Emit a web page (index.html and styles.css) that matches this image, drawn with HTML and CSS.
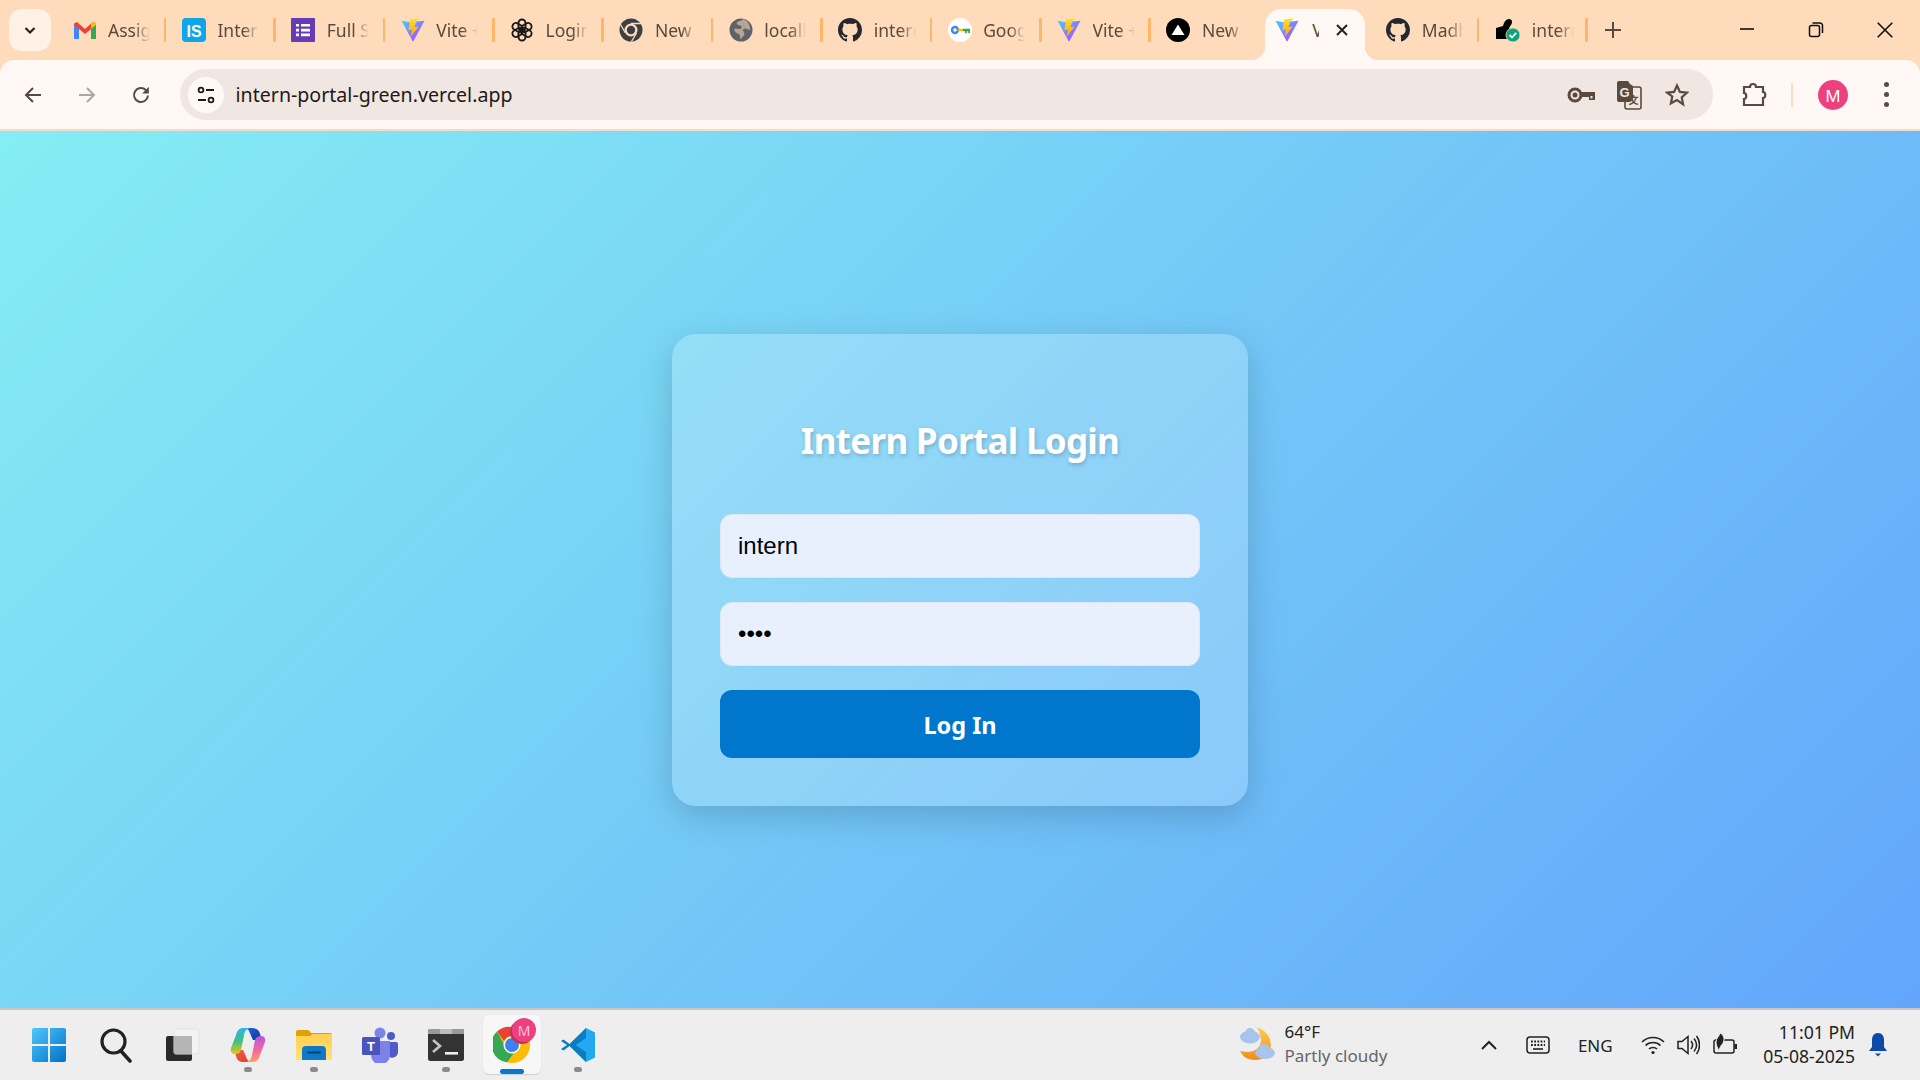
FILE: index.html
```html
<!DOCTYPE html>
<html lang="en">
<head>
<meta charset="utf-8">
<title>Vite + React</title>
<link rel="stylesheet" href="styles.css">
</head>
<body>
<svg class="defs" width="0" height="0" aria-hidden="true">
  <defs>
    <linearGradient id="vg" x1="0" y1="0" x2="1" y2="1"><stop offset="0" stop-color="#41d1ff"/><stop offset="1" stop-color="#bd34fe"/></linearGradient>
    <linearGradient id="vb" x1="0" y1="0" x2="0" y2="1"><stop offset="0" stop-color="#ffdd35"/><stop offset="1" stop-color="#ffa800"/></linearGradient>
    <linearGradient id="winG" x1="0" y1="0" x2="1" y2="1"><stop offset="0" stop-color="#4fc8fb"/><stop offset="1" stop-color="#0071c9"/></linearGradient>
    <linearGradient id="copA" x1="0" y1="0" x2="1" y2="1"><stop offset="0" stop-color="#1d6fe0"/><stop offset="1" stop-color="#14309c"/></linearGradient>
    <linearGradient id="copB" x1="0" y1="0" x2="0" y2="1"><stop offset="0" stop-color="#b358e0"/><stop offset=".55" stop-color="#f268a0"/><stop offset="1" stop-color="#fba35e"/></linearGradient>
    <linearGradient id="copC" x1="0" y1="0" x2="0" y2="1"><stop offset="0" stop-color="#2ab4ee"/><stop offset=".5" stop-color="#3fbf7f"/><stop offset="1" stop-color="#e8c51a"/></linearGradient>
    <linearGradient id="copD" x1="0" y1="0" x2="1" y2="1"><stop offset="0" stop-color="#f2603a"/><stop offset="1" stop-color="#e03a3a"/></linearGradient>
    <linearGradient id="moon" x1="0" y1="0" x2="0" y2="1"><stop offset="0" stop-color="#fbcf4f"/><stop offset="1" stop-color="#f28a1e"/></linearGradient>
    <linearGradient id="folder" x1="0" y1="0" x2="0" y2="1"><stop offset="0" stop-color="#ffd04f"/><stop offset="1" stop-color="#ffe27a"/></linearGradient>
    <symbol id="vite" viewBox="0 0 24 24">
      <path d="M0.500 2.800 L9 4.200 L15.500 3.600 L23.500 2.800 L12.500 23 Q12 23.800 11.500 23 Z" fill="url(#vg)"/>
      <path d="M18.200 0.300 L9 1.600 L7.400 12.300 L11 11.500 L9.600 19 L17.600 8.400 L13.400 9.200 L15 4.400 Z" fill="url(#vb)"/>
    </symbol>
    <symbol id="gh" viewBox="0 0 16 16">
      <path fill="#24292f" d="M8 0C3.58 0 0 3.58 0 8c0 3.54 2.29 6.53 5.47 7.59.4.07.55-.17.55-.38 0-.19-.01-.82-.01-1.49-2.01.37-2.53-.49-2.69-.94-.09-.23-.48-.94-.82-1.13-.28-.15-.68-.52-.01-.53.63-.01 1.08.58 1.23.82.72 1.21 1.87.87 2.33.66.07-.52.28-.87.51-1.07-1.78-.2-3.64-.89-3.64-3.95 0-.87.31-1.59.82-2.15-.08-.2-.36-1.02.08-2.12 0 0 .67-.21 2.2.82.64-.18 1.32-.27 2-.27.68 0 1.36.09 2 .27 1.53-1.04 2.2-.82 2.2-.82.44 1.1.16 1.92.08 2.12.51.56.82 1.27.82 2.15 0 3.07-1.87 3.75-3.65 3.95.29.25.54.73.54 1.48 0 1.07-.01 1.93-.01 2.2 0 .21.15.46.55.38A8.013 8.013 0 0016 8c0-4.42-3.58-8-8-8z"/>
    </symbol>
  </defs>
</svg>

<header class="chrome">
  <div class="tabstrip">
    <button class="tabsearch"><svg viewBox="0 0 16 16" width="16" height="16"><path d="M3.500 6 L8 10.500 L12.500 6" fill="none" stroke="#2b211a" stroke-width="2.200"/></svg></button>
    <div class="tabs">
      <div class="tab">
        <svg class="fav" viewBox="0 0 24 24"><path d="M1 21V5.500l3-1.500 8 7 8-7 3 1.500V21h-5V11l-6 5-6-5v10z" fill="#ea4335"/><path d="M1 21h5V11L1 6.500z" fill="#4285f4"/><path d="M18 21h5V6.500L18 11z" fill="#34a853"/><path d="M18 11V5.500l2-1.500 3 1.500v1.500z" fill="#fbbc04"/></svg>
        <span class="title">Assignment</span>
      </div>
      <div class="tab">
        <svg class="fav" viewBox="0 0 24 24"><rect x="0" y="0" width="24" height="24" rx="4" fill="#0ea5e9"/><text x="12" y="18.500" class="fav-letters">IS</text></svg>
        <span class="title">Intern</span>
      </div>
      <div class="tab">
        <svg class="fav" viewBox="0 0 24 24"><rect width="24" height="24" rx="1" fill="#673ab7"/><path d="M5 6h3v2.600H5zM10 6h9v2.600h-9zM5 10.800h3v2.600H5zM10 10.800h9v2.600h-9zM5 15.600h3v2.600H5zM10 15.600h9v2.600h-9z" fill="#fff"/></svg>
        <span class="title">Full Stack</span>
      </div>
      <div class="tab">
        <svg class="fav"><use href="#vite"/></svg>
        <span class="title">Vite + React</span>
      </div>
      <div class="tab">
        <svg class="fav" viewBox="0 0 24 24" fill="none" stroke="#1a1a1a" stroke-width="1.900"><rect x="8.500" y="1.500" width="7" height="11" rx="3.500"/><rect x="8.500" y="1.500" width="7" height="11" rx="3.500" transform="rotate(60 12 12)"/><rect x="8.500" y="1.500" width="7" height="11" rx="3.500" transform="rotate(120 12 12)"/><rect x="8.500" y="1.500" width="7" height="11" rx="3.500" transform="rotate(180 12 12)"/><rect x="8.500" y="1.500" width="7" height="11" rx="3.500" transform="rotate(240 12 12)"/><rect x="8.500" y="1.500" width="7" height="11" rx="3.500" transform="rotate(300 12 12)"/></svg>
        <span class="title">Login</span>
      </div>
      <div class="tab">
        <svg class="fav" viewBox="0 0 24 24"><circle cx="12" cy="12" r="11.500" fill="#3c4043"/><circle cx="12" cy="12" r="6.500" fill="#fedbbb"/><circle cx="12" cy="12" r="4.200" fill="#3c4043"/><path d="M12 5.500h10M6.400 15 1.500 6.500M17.600 15 12.500 23.500" stroke="#fedbbb" stroke-width="1.300"/></svg>
        <span class="title">New Tab</span>
      </div>
      <div class="tab">
        <svg class="fav" viewBox="0 0 24 24"><circle cx="12" cy="12" r="11.500" fill="#5f6368"/><path d="M14 1.500c-2 2-5 1-6 3-1 1 1 3 3 3 2 0 2 2 1 3-1 1-4 0-6 0-1 0-1 2 0 3 1 2 4 2 5 4 0 2 0 3 1 4 .500-2 2-3 3-4 1-2 0-3-1-5-.500-1 1-2 2-2 2 0 4 1 5 2 .500-5-2-10-7-11.500z" fill="#fedbbb" opacity=".55"/></svg>
        <span class="title">localhost</span>
      </div>
      <div class="tab">
        <svg class="fav"><use href="#gh"/></svg>
        <span class="title">intern-portal</span>
      </div>
      <div class="tab">
        <svg class="fav" viewBox="0 0 24 24"><circle cx="12" cy="12" r="12" fill="#fff"/><circle cx="7" cy="12" r="3" fill="none" stroke="#4285f4" stroke-width="2.400"/><rect x="10" y="10.800" width="5" height="2.400" fill="#fbbc04"/><path d="M15 10.800h7v4.500h-1.800v-2.100h-1.400v2.100H17v-2.100h-2z" fill="#34a853"/></svg>
        <span class="title">Google</span>
      </div>
      <div class="tab">
        <svg class="fav"><use href="#vite"/></svg>
        <span class="title">Vite + React</span>
      </div>
      <div class="tab tab-last">
        <svg class="fav" viewBox="0 0 24 24"><circle cx="12" cy="12" r="12" fill="#000"/><path d="M12 6.500 18.500 17h-13z" fill="#fff"/></svg>
        <span class="title">New Tab</span>
      </div>
      <div class="tab tab-active">
        <svg class="fav"><use href="#vite"/></svg>
        <span class="title title-short">Vite</span>
        <svg class="close" viewBox="0 0 12 12" width="12" height="12"><path d="M1 1l10 10M11 1 1 11" stroke="#2b211a" stroke-width="2"/></svg>
      </div>
      <div class="tab">
        <svg class="fav"><use href="#gh"/></svg>
        <span class="title">Madhu</span>
      </div>
      <div class="tab">
        <svg class="fav" viewBox="0 0 24 24"><path d="M0 10l7-2c1-4 3-7 6-7s4 3 2 6c-2 2-2 4-2 7v7H0z" fill="#000"/><circle cx="17" cy="17" r="7" fill="#10a37f" stroke="#fedbbb" stroke-width=".8"/><path d="M13.500 17l2.500 2.500 4.200-4.700" fill="none" stroke="#fff" stroke-width="1.800"/></svg>
        <span class="title">intern</span>
      </div>
    </div>
    <button class="newtab"><svg viewBox="0 0 16 16" width="16" height="16"><path d="M8 0v16M0 8h16" stroke="#5a4a3d" stroke-width="2"/></svg></button>
    <div class="winctl">
      <svg viewBox="0 0 16 16" width="16" height="16"><path d="M1 7h14" stroke="#111" stroke-width="1.600"/></svg>
      <svg viewBox="0 0 16 16" width="16" height="16"><rect x="1.500" y="3.500" width="10" height="11" rx="2" fill="none" stroke="#111" stroke-width="1.500"/><path d="M4.500 1h7.500a2.500 2.500 0 0 1 2.500 2.500V11" fill="none" stroke="#111" stroke-width="1.500"/></svg>
      <svg viewBox="0 0 16 16" width="16" height="16"><path d="M.7.7l14.600 14.600M15.300.7.700 15.300" stroke="#111" stroke-width="1.600"/></svg>
    </div>
  </div>

  <div class="toolbar">
    <button class="navbtn"><svg viewBox="0 0 20 20" width="20" height="20"><path d="M18 10H3M10 3l-7 7 7 7" fill="none" stroke="#5a4a3d" stroke-width="2"/></svg></button>
    <button class="navbtn"><svg viewBox="0 0 20 20" width="20" height="20"><path d="M2 10h15M10 3l7 7-7 7" fill="none" stroke="#b0a69f" stroke-width="2"/></svg></button>
    <button class="navbtn"><svg viewBox="0 0 20 20" width="20" height="20"><path d="M17 10.500a7 7 0 1 1-2.200-5.600L17 7" fill="none" stroke="#5a4a3d" stroke-width="2"/><path d="M17.800 1.800v6.600h-6.600" fill="#5a4a3d"/></svg></button>
    <div class="omnibox">
      <span class="tune"><svg viewBox="0 0 20 20" width="20" height="20"><circle cx="5" cy="5" r="2.400" fill="none" stroke="#1f1a17" stroke-width="1.800"/><path d="M10 5h8M2 15h8" stroke="#1f1a17" stroke-width="1.800"/><circle cx="15" cy="15" r="2.400" fill="none" stroke="#1f1a17" stroke-width="1.800"/></svg></span>
      <span class="url">intern-portal-green.vercel.app</span>
      <span class="omni-icons">
        <svg class="oi-key" viewBox="0 0 28 18" width="28" height="18"><circle cx="8" cy="9" r="6" fill="none" stroke="#5a4a3d" stroke-width="3"/><circle cx="8" cy="9" r="2.500" fill="#5a4a3d"/><path d="M14 6h14v8h-6v-3h-8z" fill="#5a4a3d"/><rect x="23.500" y="10" width="2" height="2.500" fill="#f0e7e2"/></svg>
        <svg class="oi-tr" viewBox="0 0 26 30" width="26" height="30"><rect x="9" y="7" width="16" height="22" rx="2" fill="#f0e7e2" stroke="#5a4a3d" stroke-width="1.600"/><path d="M3 1h9l2 3 3 2v14l-3 2H3a2 2 0 0 1-2-2V3a2 2 0 0 1 2-2z" fill="#5a4a3d"/><text x="8.500" y="17" class="translate-g">G</text><text x="17.500" y="24" class="translate-z">文</text></svg>
        <svg viewBox="0 0 24 24" width="24" height="24"><path d="M12 2.500l2.900 6.400 7 .8-5.200 4.700 1.400 6.900L12 17l-6.100 3.300 1.400-6.900L2.100 9.700l7-.8z" fill="none" stroke="#5a4a3d" stroke-width="2.200"/></svg>
      </span>
    </div>
    <button class="extbtn"><svg viewBox="0 0 26 26" width="26" height="26"><path d="M3 5h6c0-4 6-4 6 0h7v5c3 0 3 6 0 6v7H3v-6c3 0 3-6 0-6z" fill="none" stroke="#5a4a3d" stroke-width="2.200"/></svg></button>
    <span class="tool-sep"></span>
    <span class="avatar">M</span>
    <button class="morebtn"><span></span><span></span><span></span></button>
  </div>
</header>

<main class="page">
  <form class="card">
    <h1 class="card-title">Intern Portal Login</h1>
    <input class="field" type="text" value="intern">
    <input class="field" type="password" value="1234">
    <button class="submit" type="button">Log In</button>
  </form>
</main>

<footer class="taskbar">
  <div class="apps">
    <div class="app app-start">
      <svg viewBox="0 0 36 36" width="36" height="36"><path d="M1 3a2 2 0 0 1 2-2h14v16H1zM19 1h14a2 2 0 0 1 2 2v14H19zM1 19h16v16H3a2 2 0 0 1-2-2zM19 19h16v14a2 2 0 0 1-2 2H19z" fill="url(#winG)"/></svg>
    </div>
    <div class="app">
      <svg viewBox="0 0 36 36" width="36" height="36"><circle cx="15.500" cy="14.500" r="11.500" fill="none" stroke="#222" stroke-width="3.200"/><path d="M23 24l9 10" stroke="#222" stroke-width="3.600" stroke-linecap="round"/></svg>
    </div>
    <div class="app">
      <svg viewBox="0 0 36 36" width="36" height="36"><rect x="2" y="9" width="26" height="25" rx="2" fill="#2a2a2a"/><rect x="10" y="2" width="25" height="25" rx="2" fill="#f3f3f3" stroke="#e2e2e2"/><rect x="10" y="9" width="18" height="18" fill="#b5b5b5"/></svg>
    </div>
    <div class="app has-dot">
      <svg viewBox="0 0 36 36" width="36" height="36">
        <path d="M13 1h9c5 0 7 2 8 6l2 6h-9c-2-4-3-7-4-9-1-2-3-3-6-3z" fill="url(#copA)"/>
        <path d="M23 35h-9c-5 0-7-2-8-6l-2-6h9c2 4 3 7 4 9 1 2 3 3 6 3z" fill="url(#copD)"/>
        <path d="M13 1h7c-4 1-5 3-6 7l-3 15c-1 3-3 4-6 4-3 0-5-2-4-6L6 8c1-4 3-7 7-7z" fill="url(#copC)"/>
        <path d="M23 35h-7c4-1 5-3 6-7l3-15c1-3 3-4 6-4 3 0 5 2 4 6L30 28c-1 4-3 7-7 7z" fill="url(#copB)"/>
      </svg>
    </div>
    <div class="app has-dot">
      <svg viewBox="0 0 36 36" width="36" height="36"><path d="M0 5a2 2 0 0 1 2-2h9c2 0 3 1 4 3h19a2 2 0 0 1 2 2v6H0z" fill="#dfa200"/><path d="M0 9h14l3-2h19v26H0z" fill="url(#folder)"/><path d="M6 33v-10a4 4 0 0 1 4-4h16a4 4 0 0 1 4 4v10z" fill="#0d79c8"/><rect x="11" y="24.500" width="14" height="2" rx="1" fill="#063f73"/></svg>
    </div>
    <div class="app">
      <svg viewBox="0 0 36 36" width="36" height="36"><circle cx="29" cy="9" r="4" fill="#5059c9"/><path d="M25 15h9a2 2 0 0 1 2 2v8a6 6 0 0 1-11 3z" fill="#5059c9"/><circle cx="18" cy="6" r="5.500" fill="#7b83eb"/><path d="M9 14h19v14a9 9 0 0 1-19 0z" fill="#7b83eb"/><rect x="0" y="10" width="18" height="18" rx="1.500" fill="#4b53bc"/><text x="9" y="24" class="teams-t">T</text></svg>
    </div>
    <div class="app has-dot">
      <svg viewBox="0 0 36 36" width="36" height="36"><rect y="2" width="36" height="32" rx="2.500" fill="#333"/><path d="M0 4.500A2.500 2.500 0 0 1 2.500 2H36v5H0z" fill="#9a9a9a"/><rect x="12" y="2" width="12" height="5" fill="#bdbdbd"/><path d="M5 13l7 6-7 6" fill="none" stroke="#c4c4c4" stroke-width="2.600"/><rect x="17" y="25" width="13" height="2.600" fill="#eee"/></svg>
    </div>
    <div class="app app-active">
      <svg class="chrome-logo" viewBox="0 0 38 38" width="38" height="38"><circle cx="19" cy="19" r="18" fill="#fbbc04"/><path d="M19 1a18 18 0 0 1 15.600 9H19a9 9 0 0 0-8 5L4 5.500A18 18 0 0 1 19 1z" fill="#ea4335"/><path d="M4 5.500l7.500 14a9 9 0 0 0 9 8L14 36.300A18 18 0 0 1 4 5.500z" fill="#34a853"/><circle cx="19" cy="19" r="8.500" fill="#fff"/><circle cx="19" cy="19" r="7" fill="#3b82f0"/></svg>
      <span class="app-badge">M</span>
    </div>
    <div class="app has-dot">
      <svg viewBox="0 0 36 36" width="36" height="36"><path d="M26 1l9 4.500v25L26 35 10 19z" fill="#23a8f2"/><path d="M26 1 9.500 17l-6-4.500L1 14l6 4-6 4 2.500 1.500 6-4.500L26 35V25L15.500 18 26 11z" fill="#0a7cc1"/></svg>
    </div>
  </div>
  <div class="weather">
    <svg viewBox="0 0 36 36" width="36" height="36"><path d="M17 1c12 3 17 14 14 24-2 7-11 11-21 8-4-1-7-4-9-8 12 3 20-1 21-10 0-6-2-11-5-14z" fill="url(#moon)"/><ellipse cx="11" cy="11" rx="10" ry="6.500" fill="#a9c4ec"/><circle cx="11" cy="7" r="5" fill="#a9c4ec"/><ellipse cx="26" cy="27" rx="10" ry="6" fill="#a9c4ec"/><circle cx="25" cy="23" r="5" fill="#a9c4ec"/></svg>
    <div class="weather-text"><span class="temp">64°F</span><span class="cond">Partly cloudy</span></div>
  </div>
  <div class="tray">
    <svg class="t-chev" viewBox="0 0 18 12" width="18" height="12"><path d="M2 10l7-7 7 7" fill="none" stroke="#222" stroke-width="2"/></svg>
    <svg class="t-kbd" viewBox="0 0 24 20" width="24" height="20"><rect x="1" y="2" width="22" height="16" rx="3" fill="none" stroke="#222" stroke-width="1.500"/><path d="M5 6.500h14M5 10h14" stroke="#222" stroke-width="1.800" stroke-dasharray="1.800 1.400"/><path d="M7 14h10" stroke="#222" stroke-width="1.600"/></svg>
    <span class="lang">ENG</span>
    <svg class="t-wifi" viewBox="0 0 24 20" width="24" height="20" fill="none" stroke="#222" stroke-width="1.700"><path d="M1 7c6-6 16-6 22 0M4.500 10.500c4-4 11-4 15 0M8 14c2-2 6-2 8 0"/><circle cx="12" cy="17.500" r="1.600" fill="#222" stroke="none"/></svg>
    <svg class="t-vol" viewBox="0 0 24 24" width="24" height="24" fill="none" stroke="#222" stroke-width="1.500"><path d="M2 8.500h4l6-5v17l-6-5H2z"/><path d="M15 8c2 2.500 2 5.500 0 8M18 5.500c3.200 4 3.200 9 0 13M20.500 3c4 5 4 13 0 18"/></svg>
    <svg class="t-bat" viewBox="0 0 26 24" width="26" height="24"><rect x="2" y="7" width="20" height="13" rx="2" fill="none" stroke="#222" stroke-width="1.500"/><rect x="22.500" y="11" width="2.500" height="5" fill="#222"/><path d="M8 0c4 2 5 6 3 10-1 2-3 3-4 8-2-4-3-6-3-9 0-4 3-5 4-9z" fill="#222" stroke="#eee"/></svg>
    <div class="clock"><span>11:01 PM</span><span>05-08-2025</span></div>
    <svg class="t-bell" viewBox="0 0 20 26" width="20" height="26"><path d="M10 1c4 0 6 3 6 7v7l3 4H1l3-4V8c0-4 2-7 6-7z" fill="#0b4aa6"/><path d="M7 21.500h6l-3 3z" fill="#0b4aa6"/></svg>
  </div>
</footer>
</body>
</html>
```

FILE: styles.css
```css
* { box-sizing: border-box; }
html, body { margin: 0; height: 100%; }
body {
  height: 1080px;
  display: flex;
  flex-direction: column;
  overflow: hidden;
  font-family: "Noto Sans", "Open Sans", sans-serif;
}
button { border: 0; background: none; padding: 0; font: inherit; cursor: pointer; }
.defs { position: absolute; }

/* browser chrome */
.chrome { background: #fedbbb; flex: none; }
.tabstrip { height: 60px; display: flex; align-items: flex-start; padding-left: 9px; }
.tabsearch {
  width: 42px; height: 42px; margin-top: 9px;
  border-radius: 13px; background: #fff1e5;
  display: flex; align-items: center; justify-content: center;
}
.tabs { display: flex; margin-left: 6px; height: 60px; }
.tab {
  width: 109.400px; height: 60px; flex: none;
  display: flex; align-items: center;
  padding: 0 0 0 15.500px;
  position: relative;
  padding-bottom: 1px;
}
.tab::after {
  content: ""; position: absolute; right: 0; top: 18px;
  width: 2.500px; height: 24px; background: #fdb566; border-radius: 1px;
}
.tab-last::after { display: none; }
.fav { width: 24px; height: 24px; flex: none; }
.title {
  margin-left: 11.500px; width: 42px; overflow: hidden; white-space: nowrap;
  font-size: 17.500px; color: #5a4a3d;
  -webkit-mask-image: linear-gradient(90deg, #000 62%, transparent 100%);
  mask-image: linear-gradient(90deg, #000 62%, transparent 100%);
}
.fav-letters { font: 700 16px "Liberation Sans", sans-serif; fill: #fff; text-anchor: middle; }
.tab-active {
  width: 100px; margin-left: 5px; margin-top: 9px; height: 51px;
  padding-left: 10px; padding-bottom: 9px;
  background: #fff8f5; border-radius: 16px 16px 0 0;
}
.tab-active::after {
  left: auto; right: -14px; top: auto; bottom: 0; width: 14px; height: 14px; border-radius: 0;
  background: radial-gradient(circle at 100% 0, transparent 14px, #fff8f5 14.500px);
}
.tab-active::before {
  content: ""; position: absolute; left: -14px; bottom: 0; width: 14px; height: 14px;
  background: radial-gradient(circle at 0 0, transparent 14px, #fff8f5 14.500px);
}
.title-short { width: 7px; margin-left: 13px; -webkit-mask-image: none; mask-image: none; }
.close { margin-left: 17px; flex: none; }
.tab-active + .tab { margin-left: 0; padding-left: 21px; width: 114px; }
.tab-active + .tab + .tab { width: 108.500px; padding-left: 17px; }
.newtab { width: 16px; height: 16px; margin: 22px 0 0 17px; flex: none; display: flex; }
.winctl {
  margin-left: auto; display: flex; gap: 53px; padding: 22px 27px 0 0; align-items: center;
}
.winctl svg { display: block; }

.toolbar {
  height: 71px; background: #fff8f5;
  border-radius: 14px 14px 0 0;
  border-bottom: 2px solid #f4dccb;
  display: flex; align-items: flex-start;
  padding: 9px 0 0 11px;
  position: relative;
}
.navbtn {
  width: 54px; height: 51px; flex: none; padding-left: 12px;
  display: flex; align-items: center;
}
.omnibox {
  width: 1533px; height: 51px; margin-left: 7px; flex: none;
  background: #f0e7e2; border-radius: 26px;
  display: flex; align-items: center; padding: 0 0 0 8px;
}
.tune {
  width: 36px; height: 36px; border-radius: 50%; background: #fff8f5;
  display: flex; align-items: center; justify-content: center; flex: none;
}
.url { margin-left: 11.500px; margin-top: -1px; font-size: 19.600px; color: #1f1a17; white-space: nowrap; }
.omni-icons { margin-left: auto; display: flex; align-items: center; gap: 20px; padding-right: 24px; }
.omni-icons svg { display: block; }
.oi-key { margin-right: 1px; }
.oi-tr { margin-right: 3.500px; }
.translate-g { font: 700 13px "Liberation Sans", sans-serif; fill: #f0e7e2; text-anchor: middle; }
.translate-z { font: 700 10px "Noto Sans CJK SC", sans-serif; fill: #5a4a3d; text-anchor: middle; }
.extbtn { width: 26px; height: 51px; margin-left: 28px; display: flex; align-items: center; flex: none; }
.tool-sep { width: 2px; height: 24px; margin: 14px 0 0 24px; background: #fbdcc2; flex: none; }
.avatar {
  width: 30px; height: 30px; margin: 11px 0 0 25px; border-radius: 50%;
  background: #ee3f7e; color: #fff; font-size: 17px;
  display: flex; align-items: center; justify-content: center; flex: none;
}
.morebtn {
  width: 6px; height: 51px; margin-left: 35.500px; flex: none;
  display: flex; flex-direction: column; align-items: center; justify-content: center; gap: 5px;
}
.morebtn span { width: 5px; height: 5px; border-radius: 50%; background: #5a4a3d; flex: none; }

/* page */
.page {
  flex: 1; min-height: 0;
  background: linear-gradient(135deg, #85edf3 0%, #62a5fb 100%);
  display: flex; align-items: center; justify-content: center;
  padding-top: 1px;
}
.card {
  width: 576px; height: 472px; padding: 48px;
  border-radius: 24px;
  background: rgba(255, 255, 255, 0.2);
  box-shadow: 0 10px 34px rgba(0, 0, 0, 0.17);
  display: flex; flex-direction: column;
}
.card-title {
  margin: 37px 0 51px; height: 44px; line-height: 44px;
  font-size: 35px; font-weight: 700; color: #fff; text-align: center;
  letter-spacing: -0.700px;
  text-shadow: 1px 2px 4px rgba(0, 0, 0, 0.2);
}
.field {
  height: 64px; flex: none; width: 100%;
  margin-bottom: 24px; padding: 0 17px;
  border: 1px solid #dfe6f5; border-radius: 12px;
  background: #e8f0fe;
  font: 24px "Liberation Sans", Arial, sans-serif; color: #000;
  outline: none;
}
.submit {
  height: 68px; flex: none; border-radius: 12px; padding-top: 2px;
  background: #0077cc; color: #fff;
  font-size: 23.500px; font-weight: 700;
}

/* taskbar */
.taskbar {
  height: 72px; flex: none; background: #eeeeee;
  border-top: 2px solid #c6c6c6;
  display: flex; align-items: center; padding-left: 17px;
}
.apps { display: flex; height: 70px; align-items: center; }
.app {
  width: 66px; height: 70px; flex: none; position: relative;
  display: flex; align-items: center; justify-content: center;
}
.app-start { padding-right: 3px; }
.app svg { display: block; }
.has-dot::after {
  content: ""; position: absolute; left: 29px; bottom: 8px;
  width: 8px; height: 5px; border-radius: 3px; background: #8a8a8a;
}
.app-active::before {
  content: ""; position: absolute; left: 4px; right: 4px; top: 5px; bottom: 6px;
  background: #f7f7f7; border-radius: 6px; box-shadow: 0 1px 1px rgba(0,0,0,.12);
}
.app-active::after {
  content: ""; position: absolute; left: 21px; bottom: 6px;
  width: 24px; height: 5px; border-radius: 3px; background: #0078d4;
}
.chrome-logo { position: relative; }
.app-badge {
  position: absolute; left: 33px; top: 8px;
  width: 24px; height: 24px; border-radius: 50%;
  background: #ee3f7e; color: #f9c5d8; font-size: 14px;
  display: flex; align-items: center; justify-content: center;
  box-shadow: -2px 2px 0 #c2305f;
}
.teams-t { font: 700 13px "Liberation Sans", sans-serif; fill: #fff; text-anchor: middle; }

.weather { margin-left: 627.500px; display: flex; align-items: center; gap: 10px; margin-top: -2px; }
.weather svg { display: block; flex: none; }
.weather-text { display: flex; flex-direction: column; font-size: 17px; line-height: 24px; }
.temp { color: #222; }
.cond { color: #666; }

.tray { margin-left: auto; display: flex; align-items: center; height: 70px; }
.tray svg { display: block; flex: none; }
.t-chev { margin-right: 28.500px; }
.t-kbd { margin-right: 27.500px; }
.lang { font-size: 17px; color: #222; margin-right: 28px; }
.t-wifi { margin-right: 11px; }
.t-vol { margin-right: 12.500px; }
.t-bat { margin-right: 25px; }
.clock { display: flex; flex-direction: column; align-items: flex-end; font-size: 17.600px; line-height: 24px; color: #222; margin-top: -2px; }
.t-bell { margin: 0 32px 0 13px; }
```
